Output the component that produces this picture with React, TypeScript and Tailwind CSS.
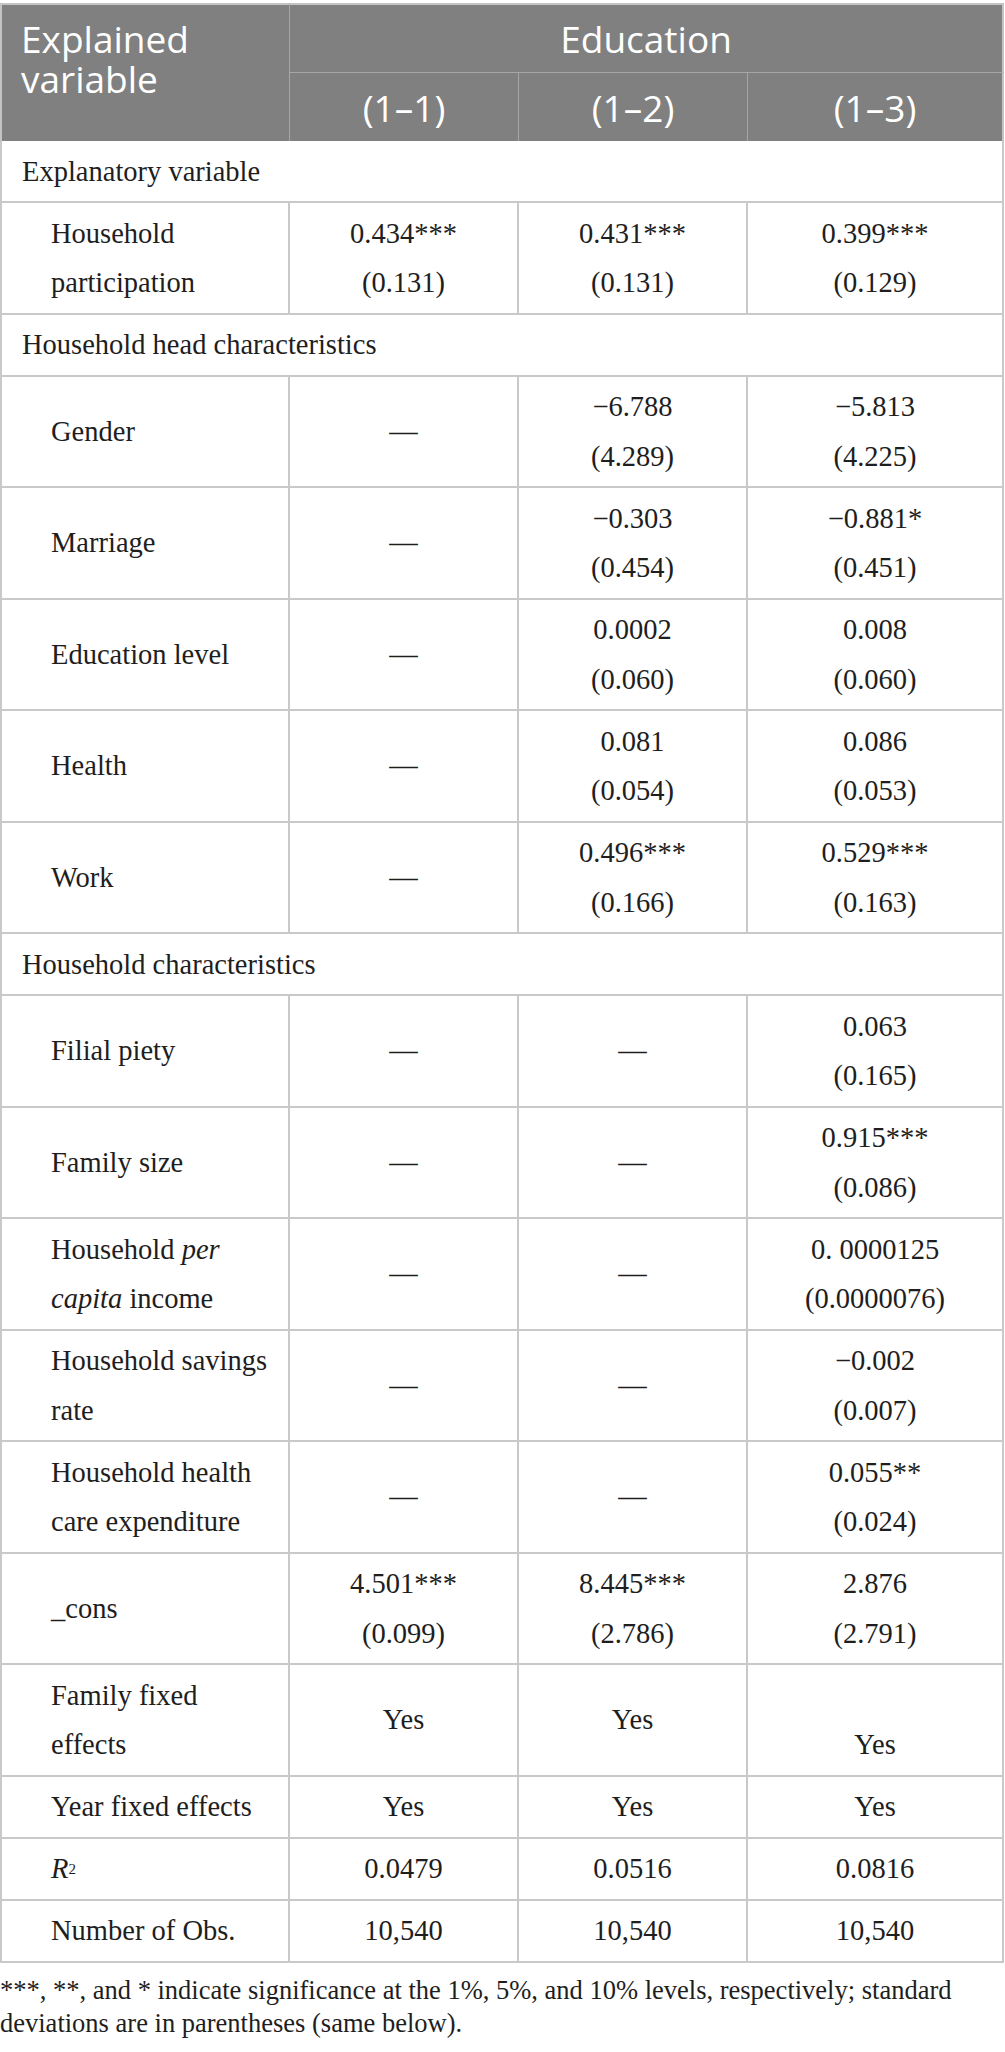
import React from "react";

type Cell = React.ReactNode;
type Row =
  | { type: "section"; label: string }
  | { type: "data"; label: React.ReactNode; vals: Cell[] };

const D = "—";
const two = (a: string, b: string) => (
  <>
    {a}
    <br />
    {b}
  </>
);

const rows: Row[] = [
  { type: "section", label: "Explanatory variable" },
  {
    type: "data",
    label: two("Household", "participation"),
    vals: [two("0.434***", "(0.131)"), two("0.431***", "(0.131)"), two("0.399***", "(0.129)")],
  },
  { type: "section", label: "Household head characteristics" },
  { type: "data", label: "Gender", vals: [D, two("−6.788", "(4.289)"), two("−5.813", "(4.225)")] },
  { type: "data", label: "Marriage", vals: [D, two("−0.303", "(0.454)"), two("−0.881*", "(0.451)")] },
  { type: "data", label: "Education level", vals: [D, two("0.0002", "(0.060)"), two("0.008", "(0.060)")] },
  { type: "data", label: "Health", vals: [D, two("0.081", "(0.054)"), two("0.086", "(0.053)")] },
  { type: "data", label: "Work", vals: [D, two("0.496***", "(0.166)"), two("0.529***", "(0.163)")] },
  { type: "section", label: "Household characteristics" },
  { type: "data", label: "Filial piety", vals: [D, D, two("0.063", "(0.165)")] },
  { type: "data", label: "Family size", vals: [D, D, two("0.915***", "(0.086)")] },
  {
    type: "data",
    label: (
      <>
        Household <i>per</i>
        <br />
        <i>capita</i> income
      </>
    ),
    vals: [D, D, two("0. 0000125", "(0.0000076)")],
  },
  { type: "data", label: two("Household savings", "rate"), vals: [D, D, two("−0.002", "(0.007)")] },
  { type: "data", label: two("Household health", "care expenditure"), vals: [D, D, two("0.055**", "(0.024)")] },
  {
    type: "data",
    label: "_cons",
    vals: [two("4.501***", "(0.099)"), two("8.445***", "(2.786)"), two("2.876", "(2.791)")],
  },
  {
    type: "data",
    label: two("Family fixed", "effects"),
    vals: [
      "Yes",
      "Yes",
      <>
        <br />
        Yes
      </>,
    ],
  },
  { type: "data", label: "Year fixed effects", vals: ["Yes", "Yes", "Yes"] },
  {
    type: "data",
    label: (
      <>
        <i>R</i>
        <sup className="text-[15px] not-italic relative top-[-4px]">2</sup>
      </>
    ),
    vals: ["0.0479", "0.0516", "0.0816"],
  },
  { type: "data", label: "Number of Obs.", vals: ["10,540", "10,540", "10,540"] },
];

export default function App() {
  const bodyCell =
    "border-b-2 border-r-2 border-[#c9c9c9] pt-[5.5px] pb-[5px] align-middle leading-[49.5px]";
  return (
    <div className="w-[1005px] bg-white pt-[3px] font-['Liberation_Serif',serif] text-[#1e1e1e]">
      <table className="w-[1004px] table-fixed border-separate border-spacing-0">
        <colgroup>
          <col className="w-[290px]" />
          <col className="w-[229px]" />
          <col className="w-[229px]" />
          <col className="w-[256px]" />
        </colgroup>
        <thead className="font-['Open_Sans',sans-serif] text-[37px] font-normal text-white">
          <tr>
            <th
              rowSpan={2}
              className="border-t-2 border-l-2 border-t-[#c4c4c4] border-l-[#c4c4c4] border-r border-r-[#a6a6a6] bg-[#808080] pl-[19px] pt-[14px] text-left align-top font-normal leading-[40px]"
            >
              Explained
              <br />
              variable
            </th>
            <th
              colSpan={3}
              className="border-t-2 border-r-2 border-t-[#c4c4c4] border-r-[#c4c4c4] border-b border-b-[#a6a6a6] bg-[#808080] pt-[14px] pb-[13px] text-center align-middle font-normal leading-[40px]"
            >
              Education
            </th>
          </tr>
          <tr>
            {["(1–1)", "(1–2)", "(1–3)"].map((h, i) => (
              <th
                key={h}
                className={
                  "bg-[#808080] h-[68px] pt-[2px] text-center align-middle font-normal leading-[40px] " +
                  (i < 2 ? "border-r border-r-[#a6a6a6]" : "border-r-2 border-r-[#c4c4c4]")
                }
              >
                {h}
              </th>
            ))}
          </tr>
        </thead>
        <tbody className="text-[28.5px]">
          {rows.map((r, idx) =>
            r.type === "section" ? (
              <tr key={idx}>
                <td colSpan={4} className={bodyCell + " border-l-2 pl-[20px] text-left"}>
                  {r.label}
                </td>
              </tr>
            ) : (
              <tr key={idx}>
                <td className={bodyCell + " border-l-2 pl-[49px] text-left"}>{r.label}</td>
                {r.vals.map((v, j) => (
                  <td key={j} className={bodyCell + " text-center"}>
                    {v}
                  </td>
                ))}
              </tr>
            )
          )}
        </tbody>
      </table>
      <p className="mt-[11px] text-[26.5px] leading-[33px]">
        ***, **, and * indicate significance at the 1%, 5%, and 10% levels, respectively; standard
        <br />
        deviations are in parentheses (same below).
      </p>
    </div>
  );
}
